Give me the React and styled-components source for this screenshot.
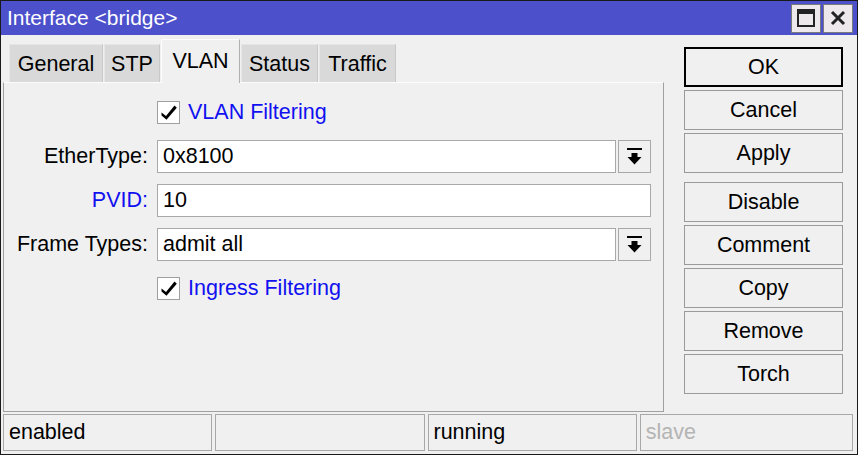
import React from 'react';
import styled, { createGlobalStyle } from 'styled-components';

const GlobalStyle = createGlobalStyle`
  html, body {
    margin: 0;
    padding: 0;
    background: #f0f0f0;
  }
  * { box-sizing: border-box; }
`;

const tabs = [
  { name: 'General', w: 94 },
  { name: 'STP', w: 56 },
  { name: 'VLAN', w: 79 },
  { name: 'Status', w: 77 },
  { name: 'Traffic', w: 77 },
];

const buttonGroups = [
  ['OK', 'Cancel', 'Apply'],
  ['Disable', 'Comment', 'Copy', 'Remove', 'Torch'],
];

const statusCells = [
  { text: 'enabled', w: 210 },
  { text: '', w: 210 },
  { text: 'running', w: 210 },
  { text: 'slave', w: 214, muted: true },
];

function Check() {
  return (
    <svg width="16" height="15" viewBox="0 0 16 15">
      <path d="M0.5 7.5 L5 11 L13.5 0.5 L15.8 2.8 L5.5 14.8 L0.5 10.5 Z" fill="#000" />
    </svg>
  );
}

function DropIcon() {
  return (
    <svg width="15" height="17" viewBox="0 0 15 17">
      <rect x="0" y="0" width="15" height="2" fill="#000" />
      <path d="M4.5 5 H10.5 V9 H14.5 L7.5 16.5 L0.5 9 H4.5 Z" fill="#000" />
    </svg>
  );
}

function App() {
  return (
    <>
      <GlobalStyle />
      <Window>
        <TitleBar>
          <Title>Interface &lt;bridge&gt;</Title>
          <TitleButtons>
            <TitleButton>
              <svg width="18" height="18" viewBox="0 0 18 18">
                <rect x="1" y="1" width="16" height="16" fill="none" stroke="#222" strokeWidth="2" />
                <rect x="1" y="1" width="16" height="4" fill="#222" />
              </svg>
            </TitleButton>
            <TitleButton>
              <svg width="16" height="16" viewBox="0 0 16 16">
                <path d="M2 2 L14 14 M14 2 L2 14" stroke="#222" strokeWidth="3" />
              </svg>
            </TitleButton>
          </TitleButtons>
        </TitleBar>
        <Body>
          <LeftColumn>
            <TabRow>
              {tabs.map((t) => (
                <Tab key={t.name} active={t.name === 'VLAN'} style={{ width: t.w }}>{t.name}</Tab>
              ))}
            </TabRow>
            <Panel>
              <Row>
                <Label />
                <CheckField>
                  <CheckBox><Check /></CheckBox>
                  <CheckLabel>VLAN Filtering</CheckLabel>
                </CheckField>
              </Row>
              <Row>
                <Label>EtherType:</Label>
                <Input>0x8100</Input>
                <DropButton><DropIcon /></DropButton>
              </Row>
              <Row>
                <Label blue>PVID:</Label>
                <Input>10</Input>
              </Row>
              <Row>
                <Label>Frame Types:</Label>
                <Input>admit all</Input>
                <DropButton><DropIcon /></DropButton>
              </Row>
              <Row>
                <Label />
                <CheckField>
                  <CheckBox><Check /></CheckBox>
                  <CheckLabel>Ingress Filtering</CheckLabel>
                </CheckField>
              </Row>
            </Panel>
          </LeftColumn>
          <ButtonColumn>
            {buttonGroups.map((group, gi) => (
              <ButtonGroup key={gi}>
                {group.map((b) => (
                  <ActionButton key={b} primary={b === 'OK'}>{b}</ActionButton>
                ))}
              </ButtonGroup>
            ))}
          </ButtonColumn>
        </Body>
        <StatusBar>
          {statusCells.map((c, i) => (
            <StatusCell key={i} muted={c.muted} style={{ width: c.w }}>{c.text}</StatusCell>
          ))}
        </StatusBar>
      </Window>
    </>
  );
}

const Window = styled.div`
  width: 858px;
  height: 455px;
  border: 1px solid #1a1a1a;
  background: #f0f0f0;
  display: flex;
  flex-direction: column;
  font-family: "Liberation Sans", Arial, sans-serif;
  font-size: 21.5px;
  color: #000;
  overflow: hidden;
`;

const TitleBar = styled.div`
  height: 34px;
  flex-shrink: 0;
  background: #4c50cb;
  display: flex;
  align-items: center;
  justify-content: space-between;
  padding: 0 4px 0 6px;
`;

const Title = styled.div`
  color: #fff;
  font-size: 21px;
`;

const TitleButtons = styled.div`
  display: flex;
  gap: 2px;
`;

const TitleButton = styled.div`
  width: 30px;
  height: 29px;
  background: #ece8ec;
  border: 1px solid #7a7a7a;
  display: flex;
  align-items: center;
  justify-content: center;
`;

const Body = styled.div`
  flex: 1;
  display: flex;
  padding: 4px 14px 0 2px;
  gap: 20px;
`;

const LeftColumn = styled.div`
  width: 661px;
  display: flex;
  flex-direction: column;
`;

const TabRow = styled.div`
  height: 43px;
  display: flex;
  align-items: flex-end;
  gap: 1px;
  padding-left: 6px;
`;

const Tab = styled.div`
  height: ${({ active }) => (active ? '44px' : '38px')};
  margin-bottom: ${({ active }) => (active ? '-1px' : '0')};
  padding-top: ${({ active }) => (active ? '0' : '2px')};
  display: flex;
  align-items: center;
  justify-content: center;
  background: ${({ active }) => (active ? '#f0f0f0' : '#d9d9d9')};
  border: 1px solid ${({ active }) => (active ? '#fcfcfc' : '#e6e6e6')};
  border-bottom: none;
  border-right-color: ${({ active }) => (active ? '#b0b0b0' : '#c8c8c8')};
  position: relative;
  z-index: ${({ active }) => (active ? 1 : 0)};
`;

const Panel = styled.div`
  flex: 1;
  border-top: 1px solid #fcfcfc;
  border-left: 1px solid #a0a0a0;
  border-right: 1px solid #a0a0a0;
  border-bottom: 1px solid #a0a0a0;
  padding: 13px 12px 0 0;
  display: flex;
  flex-direction: column;
  gap: 11px;
`;

const Row = styled.div`
  height: 33px;
  display: flex;
  align-items: center;
  gap: 2px;
`;

const Label = styled.div`
  width: 144px;
  text-align: right;
  margin-right: 7px;
  flex-shrink: 0;
  color: ${({ blue }) => (blue ? '#1010f0' : '#000')};
`;

const Input = styled.div`
  flex: 1;
  height: 33px;
  background: #fff;
  border: 1px solid #a8a8a8;
  display: flex;
  align-items: center;
  padding-left: 5px;
`;

const DropButton = styled.div`
  width: 33px;
  height: 33px;
  flex-shrink: 0;
  border: 1px solid #a8a8a8;
  background: #f0f0f0;
  display: flex;
  align-items: center;
  justify-content: center;
`;

const CheckField = styled.div`
  display: flex;
  align-items: center;
  gap: 8px;
`;

const CheckBox = styled.div`
  width: 23px;
  height: 23px;
  background: #fff;
  border: 1px solid #a0a0a0;
  display: flex;
  align-items: center;
  justify-content: center;
`;

const CheckLabel = styled.div`
  color: #1010f0;
`;

const ButtonColumn = styled.div`
  width: 159px;
  padding-top: 8px;
  display: flex;
  flex-direction: column;
  gap: 9px;
`;

const ButtonGroup = styled.div`
  display: flex;
  flex-direction: column;
  gap: 3px;
`;

const ActionButton = styled.div`
  height: 40px;
  border: ${({ primary }) => (primary ? '2px solid #000' : '1px solid #9a9a9a')};
  background: #f0f0f0;
  display: flex;
  align-items: center;
  justify-content: center;
`;

const StatusBar = styled.div`
  height: 42px;
  flex-shrink: 0;
  display: flex;
  gap: 3px;
  padding: 2px 4px 3px 2px;
`;

const StatusCell = styled.div`
  border: 1px solid #a8a8a8;
  padding-left: 5px;
  display: flex;
  align-items: center;
  color: ${({ muted }) => (muted ? '#b4b4b4' : '#000')};
`;

export default App;
